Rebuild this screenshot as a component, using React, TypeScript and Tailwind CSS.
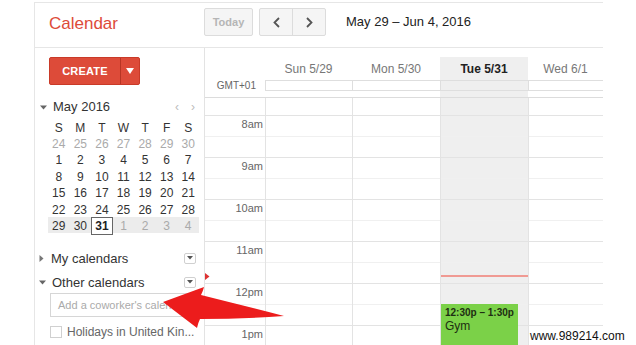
import React from "react";

const weeks = [
  ["24", "25", "26", "27", "28", "29", "30"],
  ["1", "2", "3", "4", "5", "6", "7"],
  ["8", "9", "10", "11", "12", "13", "14"],
  ["15", "16", "17", "18", "19", "20", "21"],
  ["22", "23", "24", "25", "26", "27", "28"],
  ["29", "30", "31", "1", "2", "3", "4"],
];

const days = [
  { label: "Sun 5/29", w: "w-[87px]" },
  { label: "Mon 5/30", w: "w-[88px]" },
  { label: "Tue 5/31", w: "w-[88px]", today: true },
  { label: "Wed 6/1", w: "w-[75px]" },
];

const hours = ["8am", "9am", "10am", "11am", "12pm", "1pm"];

function Caret({ dir }: { dir: "down" | "right" }) {
  return dir === "down" ? (
    <svg width="7" height="5" viewBox="0 0 7 5" className="shrink-0">
      <path d="M0 0.5h7L3.5 4.5z" fill="#666" />
    </svg>
  ) : (
    <svg width="5" height="7" viewBox="0 0 5 7" className="shrink-0">
      <path d="M0.5 0v7L4.5 3.5z" fill="#777" />
    </svg>
  );
}

function MenuBox() {
  return (
    <div className="w-[12px] h-[11px] border border-[#d0d0d0] rounded-[2px] flex items-center justify-center bg-white">
      <svg width="6" height="4" viewBox="0 0 6 4">
        <path d="M0 0h6L3 3.5z" fill="#555" />
      </svg>
    </div>
  );
}

function HourCells() {
  return (
    <>
      <div className="h-[18px] border-b border-[#e3e3e3]" />
      {hours.map((h) => (
        <div key={h}>
          <div className="h-[21px] border-b border-[#f0f0f0]" />
          <div className="h-[21px] border-b border-[#e3e3e3]" />
        </div>
      ))}
    </>
  );
}

export default function App() {
  return (
    <div className="relative w-[636px] h-[345px] overflow-hidden bg-white font-['Liberation_Sans',Arial,sans-serif] text-[#333]">
      <div className="ml-[34px] mt-[2px] w-[569px] h-[343px] border-l border-t border-[#e6e6e6] flex flex-col overflow-hidden">
        {/* top bar */}
        <div className="h-[45px] shrink-0 border-b border-[#e6e6e6] flex">
          <div className="w-[169px] pl-[14px] pt-[10px] text-[17px] leading-[21px] text-[#dd4b39]">Calendar</div>
          <div className="flex items-start pt-[5px]">
            <div className="w-[49px] h-[28px] border border-[#dcdcdc] bg-[#f5f5f5] rounded-[2px] flex items-center justify-center text-[11px] font-bold text-[#b5b5b5]">
              Today
            </div>
            <div className="ml-[6px] w-[67px] h-[28px] border border-[#dcdcdc] bg-[#f5f5f5] rounded-[2px] flex">
              <div className="w-[33px] border-r border-[#dcdcdc] flex items-center justify-center">
                <svg width="7" height="11" viewBox="0 0 7 11">
                  <path d="M6 1L1.5 5.5L6 10" stroke="#555" strokeWidth="1.8" fill="none" />
                </svg>
              </div>
              <div className="flex-1 flex items-center justify-center">
                <svg width="7" height="11" viewBox="0 0 7 11">
                  <path d="M1 1L5.5 5.5L1 10" stroke="#555" strokeWidth="1.8" fill="none" />
                </svg>
              </div>
            </div>
            <div className="ml-[20px] h-[28px] flex items-center text-[13px] text-[#222]">May 29 – Jun 4, 2016</div>
          </div>
        </div>

        <div className="flex flex-1 min-h-0">
          {/* sidebar */}
          <div className="w-[169px] shrink-0 flex flex-col">
            <div className="ml-[14px] mt-[9px] w-[91px] h-[28px] flex rounded-[2px] bg-[#dd4b39] border border-[#c93a28] text-white">
              <div className="w-[70px] flex items-center justify-center text-[11px] font-bold tracking-[0.2px]">CREATE</div>
              <div className="flex-1 border-l border-[#b83524] flex items-center justify-center">
                <svg width="8" height="6" viewBox="0 0 8 6">
                  <path d="M0 0h8L4 6z" fill="#fff" />
                </svg>
              </div>
            </div>

            <div className="mt-[14px] h-[16px] pl-[5px] pr-[9px] flex items-center">
              <Caret dir="down" />
              <span className="ml-[6px] text-[13px] text-[#333]">May 2016</span>
              <span className="ml-auto text-[12px] text-[#bbb]">‹</span>
              <span className="ml-[12px] text-[12px] text-[#bbb]">›</span>
            </div>

            <div className="ml-[13px] mt-[4px] w-[151px] text-[12px]">
              <div className="grid grid-cols-7 h-[16px] items-center text-center text-[#333]">
                {["S", "M", "T", "W", "T", "F", "S"].map((d, i) => (
                  <span key={i}>{d}</span>
                ))}
              </div>
              {weeks.map((w, wi) => (
                <div
                  key={wi}
                  className={`grid grid-cols-7 h-[16.4px] items-center text-center ${wi === 5 ? "bg-[#ececec]" : ""}`}
                >
                  {w.map((d, di) => {
                    const other = wi === 0 || (wi === 5 && di > 2);
                    const today = wi === 5 && di === 2;
                    return (
                      <span
                        key={di}
                        className={
                          today
                            ? "h-[18px] leading-[16px] border border-[#666] font-bold text-[#222] bg-white"
                            : other
                            ? "text-[#aaa]"
                            : "text-[#333]"
                        }
                      >
                        {d}
                      </span>
                    );
                  })}
                </div>
              ))}
            </div>

            <div className="mt-[15px] h-[20px] pl-[4px] pr-[8px] flex items-center">
              <Caret dir="right" />
              <span className="ml-[7px] text-[13px] text-[#333]">My calendars</span>
              <div className="ml-auto">
                <MenuBox />
              </div>
            </div>
            <div className="mt-[4px] h-[20px] pl-[4px] pr-[8px] flex items-center">
              <Caret dir="down" />
              <span className="ml-[6px] text-[13px] text-[#333]">Other calendars</span>
              <div className="ml-auto">
                <MenuBox />
              </div>
            </div>
            <div className="ml-[15px] mt-[1px] w-[147px] h-[24px] border border-[#d6d6d6] flex items-center pl-[7px] text-[11px] text-[#aaa] whitespace-nowrap overflow-hidden">
              Add a coworker's calendar
            </div>
            <div className="ml-[15px] mt-[6px] flex items-center">
              <div className="w-[12px] h-[12px] border border-[#d0d0d0] bg-white" />
              <span className="ml-[5px] text-[12px] text-[#666] whitespace-nowrap">Holidays in United Kin...</span>
            </div>
          </div>

          {/* week grid */}
          <div className="flex-1 border-l border-[#e3e3e3] flex flex-col min-w-0">
            <div className="h-[50px] shrink-0 border-b border-[#dcdcdc] flex">
              <div className="w-[60px] flex flex-col justify-end items-end pr-[9px] pb-[6px] text-[10px] leading-[11px] text-[#666]">
                GMT+01
              </div>
              {days.map((d) => (
                <div key={d.label} className={`${d.w} shrink-0 pt-[9px] flex flex-col`}>
                  <div className={`flex flex-col flex-1 ${d.today ? "bg-[#efefef]" : ""}`}>
                    <div
                      className={`h-[23px] flex items-center justify-center text-[12px] ${
                        d.today ? "font-bold text-[#222]" : "text-[#777]"
                      }`}
                    >
                      {d.label}
                    </div>
                    <div className="h-[11px] border border-r-0 border-[#dedede]" />
                  </div>
                </div>
              ))}
            </div>

            <div className="flex flex-1 min-h-0 overflow-hidden">
              <div className="w-[60px] shrink-0 relative">
                <div className="h-[18px] border-b border-[#e3e3e3]" />
                {hours.map((h) => (
                  <div key={h}>
                    <div className="h-[21px] border-b border-[#f0f0f0] text-right pr-[2px] pt-[1px] text-[11px] leading-[14px] text-[#666]">
                      {h}
                    </div>
                    <div className="h-[21px] border-b border-[#e3e3e3]" />
                  </div>
                ))}
                <svg width="5" height="7" viewBox="0 0 5 7" className="absolute left-0 top-[175px]">
                  <path d="M0 0v7L4.5 3.5z" fill="#dd3333" />
                </svg>
              </div>
              {days.map((d) => (
                <div
                  key={d.label}
                  className={`${d.w} shrink-0 border-l border-[#e3e3e3] relative ${d.today ? "bg-[#efefef]" : ""}`}
                >
                  <HourCells />
                  {d.today && (
                    <>
                      <div className="absolute left-0 right-0 top-[177px] h-[2px] bg-[#f09a93]" />
                      <div className="absolute left-0 top-[206px] w-[77px] h-[60px] bg-[#7bd148] px-[4px] pt-[2px] text-[#1e2e12]">
                        <div className="text-[10px] leading-[13px] font-bold">12:30p – 1:30p</div>
                        <div className="text-[12px] leading-[14px]">Gym</div>
                      </div>
                    </>
                  )}
                </div>
              ))}
            </div>
          </div>
        </div>
      </div>

      {/* annotation arrow */}
      <svg width="636" height="345" viewBox="0 0 636 345" className="absolute inset-0 pointer-events-none">
        <path
          d="M163 302 L204 287 Q203 291 201 295 Q245 306 284 316 Q242 319 200 319 Q198 323 197 328 Z"
          fill="#ec1c1c"
        />
      </svg>

      <div className="absolute left-[529px] top-[328px] bg-white px-[1px] text-[12px] leading-[16px] text-[#111]">
        www.989214.com
      </div>
    </div>
  );
}
